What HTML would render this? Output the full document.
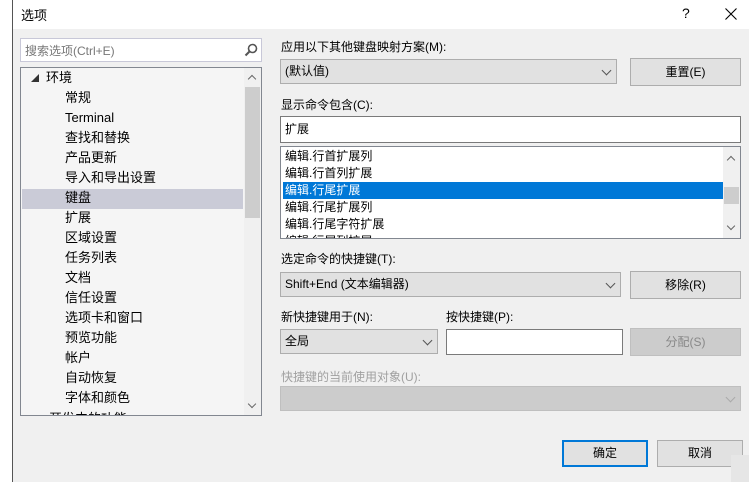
<!DOCTYPE html><html><head><meta charset="utf-8"><style>
*{margin:0;padding:0;box-sizing:border-box}
body{width:749px;height:482px;overflow:hidden;background:#f0f0f0;font-family:"Liberation Sans","Noto Sans CJK SC",sans-serif;font-size:12px;color:#000;position:relative;white-space:nowrap}
.a{position:absolute}
.box{position:absolute;border:1px solid #7a7a7a;background:#fff}
.cb{position:absolute;border:1px solid #adadad;background:#e1e1e1;padding-left:4px;line-height:22px}
.btn{position:absolute;border:1px solid #adadad;background:#e1e1e1;text-align:center}
.chev{position:absolute;right:6px;top:7px;width:7px;height:7px;border-right:1px solid #555;border-bottom:1px solid #555;transform:rotate(45deg)}
.row{position:absolute;left:0;height:20px;line-height:20px;font-size:13px}
.lr{position:absolute;left:2px;height:17px;line-height:17px;padding-left:2px}
</style></head><body>
<div class="a" style="left:0;top:0;width:12px;height:482px;background:#fff"></div>
<div class="a" style="left:12px;top:0;width:1px;height:482px;background:#555"></div>
<div class="a" style="left:13px;top:0;width:736px;height:29px;background:#fff"></div>
<div class="a" style="left:21px;top:5px;font-size:13px">选项</div>
<div class="a" style="left:682px;top:5px;font-size:14px">?</div>
<svg class="a" style="left:725px;top:8px" width="12" height="12"><path d="M0.5 0.5L11.5 11.5M11.5 0.5L0.5 11.5" stroke="#000" stroke-width="1.1"/></svg>

<div class="box" style="left:20px;top:38px;width:242px;height:24px;border-color:#c8c8d8"><span class="a" style="left:4px;top:3px;color:#777">搜索选项(Ctrl+E)</span>
<svg class="a" style="right:3px;top:4px" width="14" height="14"><circle cx="8.5" cy="5.5" r="4" fill="none" stroke="#555" stroke-width="1.6"/><line x1="5.5" y1="8.5" x2="1.5" y2="12.5" stroke="#555" stroke-width="2"/></svg></div>

<div class="box" style="left:20px;top:67px;width:242px;height:349px;background:#f5f5f5;border-color:#828790;overflow:hidden">
<div class="a" style="left:223px;top:0;width:17px;height:347px;background:#f0f0f0"></div>
<div class="a" style="left:224px;top:19px;width:15px;height:131px;background:#cdcdcd"></div>
<div class="a" style="left:228px;top:8px;width:6px;height:6px;border-left:1px solid #666;border-top:1px solid #666;transform:rotate(45deg)"></div>
<div class="a" style="left:228px;top:333px;width:6px;height:6px;border-right:1px solid #666;border-bottom:1px solid #666;transform:rotate(45deg)"></div>
<div class="a" style="left:1px;top:121px;width:221px;height:20px;background:#cacbd7"></div>
<div class="row" style="top:1px;left:10px;font-size:8px;color:#333">◢</div>
<div class="row" style="top:0;left:25px">环境</div>
<div style="position:absolute;left:44px;top:20px;width:170px">
<div class="row" style="top:0">常规</div>
<div class="row" style="top:20px">Terminal</div>
<div class="row" style="top:40px">查找和替换</div>
<div class="row" style="top:60px">产品更新</div>
<div class="row" style="top:80px">导入和导出设置</div>
<div class="row" style="top:100px">键盘</div>
<div class="row" style="top:120px">扩展</div>
<div class="row" style="top:140px">区域设置</div>
<div class="row" style="top:160px">任务列表</div>
<div class="row" style="top:180px">文档</div>
<div class="row" style="top:200px">信任设置</div>
<div class="row" style="top:220px">选项卡和窗口</div>
<div class="row" style="top:240px">预览功能</div>
<div class="row" style="top:260px">帐户</div>
<div class="row" style="top:280px">自动恢复</div>
<div class="row" style="top:300px">字体和颜色</div>
<div class="row" style="top:321px;left:-16px">开发中的功能</div>
</div></div>

<div class="a" style="left:281px;top:38px">应用以下其他键盘映射方案(M):</div>
<div class="cb" style="left:280px;top:59px;width:337px;height:25px">(默认值)<div class="chev"></div></div>
<div class="btn" style="left:630px;top:58px;width:111px;height:28px;line-height:26px">重置(E)</div>
<div class="a" style="left:281px;top:96px">显示命令包含(C):</div>
<div class="box" style="left:280px;top:116px;width:461px;height:27px;padding:3px 4px">扩展</div>
<div class="box" style="left:280px;top:146px;width:461px;height:93px;border-color:#828790;overflow:hidden">
<div class="a" style="left:442px;top:0;width:17px;height:91px;background:#f0f0f0"></div>
<div class="a" style="left:443px;top:40px;width:15px;height:17px;background:#cdcdcd"></div>
<div class="a" style="left:447px;top:10px;width:6px;height:6px;border-left:1px solid #666;border-top:1px solid #666;transform:rotate(45deg)"></div>
<div class="a" style="left:447px;top:76px;width:6px;height:6px;border-right:1px solid #666;border-bottom:1px solid #666;transform:rotate(45deg)"></div>
<div class="lr" style="top:1px">编辑.行首扩展列</div>
<div class="lr" style="top:18px">编辑.行首列扩展</div>
<div class="lr" style="top:35px;width:440px;background:#0078d7;color:#fff">编辑.行尾扩展</div>
<div class="lr" style="top:52px">编辑.行尾扩展列</div>
<div class="lr" style="top:69px">编辑.行尾字符扩展</div>
<div class="lr" style="top:86px">编辑.行尾列扩展</div>
</div>

<div class="a" style="left:281px;top:250px">选定命令的快捷键(T):</div>
<div class="cb" style="left:280px;top:272px;width:341px;height:25px">Shift+End (文本编辑器)<div class="chev"></div></div>
<div class="btn" style="left:630px;top:271px;width:111px;height:28px;line-height:26px">移除(R)</div>
<div class="a" style="left:281px;top:308px">新快捷键用于(N):</div>
<div class="a" style="left:446px;top:308px">按快捷键(P):</div>
<div class="cb" style="left:280px;top:329px;width:158px;height:25px">全局<div class="chev"></div></div>
<div class="box" style="left:446px;top:329px;width:177px;height:26px"></div>
<div class="btn" style="left:630px;top:328px;width:111px;height:28px;line-height:26px;background:#cccccc;border-color:#bfbfbf;color:#888">分配(S)</div>
<div class="a" style="left:281px;top:368px;color:#a0a0a0">快捷键的当前使用对象(U):</div>
<div class="cb" style="left:280px;top:386px;width:461px;height:25px;background:#cccccc;border-color:#bfbfbf"><div class="chev" style="border-color:#aaa"></div></div>
<div class="btn" style="left:562px;top:440px;width:86px;height:27px;line-height:23px;border:2px solid #0078d7">确定</div>
<div class="btn" style="left:657px;top:440px;width:86px;height:27px;line-height:25px">取消</div>
<div class="a" style="left:731px;top:455px;width:18px;height:27px;background:#e6e6e6"></div>
</body></html>
